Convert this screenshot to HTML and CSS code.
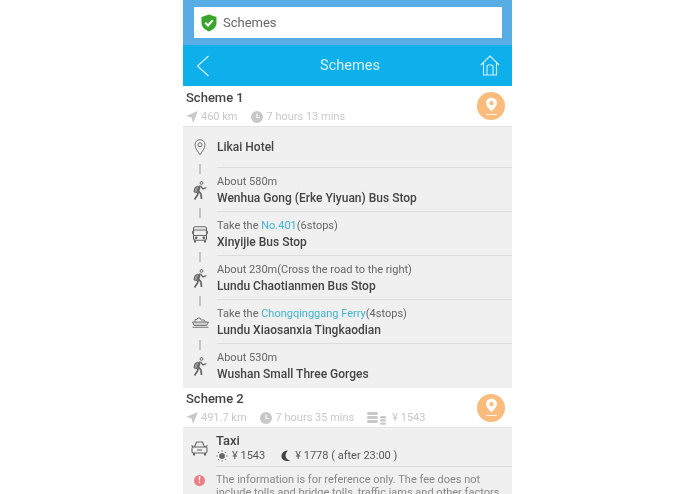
FILE: index.html
```html
<!DOCTYPE html>
<html lang="en">
<head>
  <meta charset="UTF-8">
  <meta name="viewport" content="width=device-width, initial-scale=1.0">
  <title>Schemes</title>
  <link rel="stylesheet" href="styles.css">
</head>
<body>
  <div class="app">
    <div class="top-bar">
      <div class="url-box">
        <svg class="shield" width="16" height="18" viewBox="0 0 16 18"><path d="M8 0.5 L15.5 3 V9 C15.5 13 12 16 8 17.5 C4 16 0.5 13 0.5 9 V3 Z" fill="#3aa52c"/><path d="M4.3 8.8 L7 11.5 L11.8 6.3" fill="none" stroke="#fff" stroke-width="2"/></svg>
        <span>Schemes</span>
      </div>
    </div>

    <!-- header -->
    <div class="nav">
      <svg width="14" height="22" viewBox="0 0 14 22"><path d="M12.5 1 L1.5 11 L12.5 21" fill="none" stroke="#d5f1fb" stroke-width="1.2"/></svg>
      <span class="nav-title">Schemes</span>
      <svg width="20" height="21" viewBox="0 0 20 21" fill="none" stroke="#d5f1fb" stroke-width="1.1"><path d="M0.8 10 L10 1 L19.2 10"/><path d="M3.5 8 V20 H16.5 V8"/><path d="M7 20 V12 C7 9 13 9 13 12 V20"/></svg>
    </div>

    <div class="scheme">
      <div class="scheme-info">
        <h3 class="scheme-name">Scheme 1</h3>
        <div class="scheme-meta">
          <span class="meta-item"><svg width="12" height="12" viewBox="0 0 12 12"><path d="M12 0 L7 12 L5.6 6.4 L0 5 Z" fill="#c8c8c8"/></svg>460 km</span>
          <span class="meta-item"><svg width="12" height="12" viewBox="0 0 12 12"><circle cx="6" cy="6" r="6" fill="#c8c8c8"/><path d="M6 2.5 V6.5 H9" fill="none" stroke="#fff" stroke-width="1.1"/></svg>7 hours 13 mins</span>
        </div>
      </div>
      <div class="pin-btn">
        <svg width="13" height="19" viewBox="0 0 12 17"><path d="M6 0.5 C2.8 0.5 1 2.8 1 5.3 C1 8.2 4 10.6 6 13 C8 10.6 11 8.2 11 5.3 C11 2.8 9.2 0.5 6 0.5 Z M6 3.4 A2 2 0 1 1 6 7.4 A2 2 0 1 1 6 3.4 Z" fill="#fff" fill-rule="evenodd"/><path d="M1 15.8 H11" stroke="#fff" stroke-width="0.8"/></svg>
      </div>
    </div>

    <div class="steps">
      <div class="step step-first">
        <div class="step-icon">
          <svg width="12" height="17" viewBox="0 0 12 17" fill="none" stroke="#666" stroke-width="0.9"><path d="M6 16 C4 12.5 1 9.5 1 5.8 C1 2.8 3.2 0.7 6 0.7 C8.8 0.7 11 2.8 11 5.8 C11 9.5 8 12.5 6 16 Z"/><circle cx="6" cy="5.8" r="2"/></svg>
        </div>
        <div class="step-body"><div class="step-place">Likai Hotel</div></div>
      </div>
      <div class="step">
        <div class="step-icon">
          <svg width="14" height="19" viewBox="0 0 14 19"><use href="#walker"/></svg>
        </div>
        <div class="step-body">
          <div class="step-note">About 580m</div>
          <div class="step-place">Wenhua Gong (Erke Yiyuan) Bus Stop</div>
        </div>
      </div>
      <div class="step">
        <div class="step-icon">
          <svg width="16" height="17" viewBox="0 0 16 17" fill="none" stroke="#666" stroke-width="1.1"><rect x="1.5" y="0.8" width="13" height="13.4" rx="2"/><path d="M1.5 4 H14.5 M1.5 9.5 H14.5 M0.3 5 V8 M15.7 5 V8"/><path d="M3 14.5 V16.5 M13 14.5 V16.5" stroke-width="2"/><circle cx="4.2" cy="11.8" r="0.8" fill="#666"/><circle cx="11.8" cy="11.8" r="0.8" fill="#666"/></svg>
        </div>
        <div class="step-body">
          <div class="step-note">Take the <span class="step-link">No.401</span>(6stops)</div>
          <div class="step-place">Xinyijie Bus Stop</div>
        </div>
      </div>
      <div class="step">
        <div class="step-icon">
          <svg width="14" height="19" viewBox="0 0 14 19"><use href="#walker"/></svg>
        </div>
        <div class="step-body">
          <div class="step-note">About 230m(Cross the road to the right)</div>
          <div class="step-place">Lundu Chaotianmen Bus Stop</div>
        </div>
      </div>
      <div class="step">
        <div class="step-icon">
          <svg width="17" height="11" viewBox="0 0 17 11" fill="none" stroke="#777" stroke-width="1"><path d="M0.5 5 H16.5 L14.5 8.5 H2 Z" fill="#ccc"/><path d="M3 5 V2.5 H5 L5.8 1 H8 L9 3 H12 L13.5 5"/><path d="M0.5 10.3 H16.5"/></svg>
        </div>
        <div class="step-body">
          <div class="step-note">Take the <span class="step-link">Chongqinggang Ferry</span>(4stops)</div>
          <div class="step-place">Lundu Xiaosanxia Tingkaodian</div>
        </div>
      </div>
      <div class="step step-last">
        <div class="step-icon">
          <svg width="14" height="19" viewBox="0 0 14 19"><use href="#walker"/></svg>
        </div>
        <div class="step-body">
          <div class="step-note">About 530m</div>
          <div class="step-place">Wushan Small Three Gorges</div>
        </div>
      </div>
    </div>

    <div class="scheme scheme-second">
      <div class="scheme-info">
        <h3 class="scheme-name">Scheme 2</h3>
        <div class="scheme-meta">
          <span class="meta-item"><svg width="12" height="12" viewBox="0 0 12 12"><path d="M12 0 L7 12 L5.6 6.4 L0 5 Z" fill="#c8c8c8"/></svg>491.7 km</span>
          <span class="meta-item"><svg width="12" height="12" viewBox="0 0 12 12"><circle cx="6" cy="6" r="6" fill="#c8c8c8"/><path d="M6 2.5 V6.5 H9" fill="none" stroke="#fff" stroke-width="1.1"/></svg>7 hours 35 mins</span>
          <span class="meta-item meta-fee"><svg width="20" height="13" viewBox="0 0 20 13" fill="#c8c8c8"><rect x="0" y="0" width="11" height="3" rx="1.4"/><rect x="0" y="4" width="11" height="3" rx="1.4"/><rect x="0" y="8" width="11" height="3" rx="1.4"/><rect x="13" y="4" width="6" height="2.4" rx="1.2"/><rect x="13" y="7.2" width="6" height="2.4" rx="1.2"/><rect x="13" y="10.4" width="6" height="2.4" rx="1.2"/></svg>&#165; 1543</span>
        </div>
      </div>
      <div class="pin-btn">
        <svg width="13" height="19" viewBox="0 0 12 17"><path d="M6 0.5 C2.8 0.5 1 2.8 1 5.3 C1 8.2 4 10.6 6 13 C8 10.6 11 8.2 11 5.3 C11 2.8 9.2 0.5 6 0.5 Z M6 3.4 A2 2 0 1 1 6 7.4 A2 2 0 1 1 6 3.4 Z" fill="#fff" fill-rule="evenodd"/><path d="M1 15.8 H11" stroke="#fff" stroke-width="0.8"/></svg>
      </div>
    </div>

    <div class="taxi">
      <div class="taxi-row">
        <div class="step-icon">
          <svg width="17" height="15" viewBox="0 0 17 15" fill="none" stroke="#666" stroke-width="1.1"><path d="M3.5 6 L5.5 1 H11.5 L13.5 6"/><path d="M0.5 4.5 L2.5 6 M16.5 4.5 L14.5 6"/><rect x="1" y="6" width="15" height="6" rx="1.5"/><path d="M3 12 V14.5 M14 12 V14.5" stroke-width="2"/><path d="M6 9 H11"/></svg>
        </div>
        <div class="taxi-body">
          <div class="taxi-title">Taxi</div>
          <div class="taxi-fares">
            <span class="fare"><svg width="12" height="12" viewBox="0 0 12 12" fill="#666" stroke="#666" stroke-width="0.8"><circle cx="6" cy="6" r="2.6"/><path d="M6 0.3 V1.8 M6 10.2 V11.7 M0.3 6 H1.8 M10.2 6 H11.7 M2 2 L3 3 M9 9 L10 10 M2 10 L3 9 M9 3 L10 2"/></svg>&#165; 1543</span>
            <span class="fare"><svg width="10" height="12" viewBox="0 0 10 12"><path d="M7 0.5 C3 0.8 0.5 3 0.5 6.2 C0.5 9.4 3.2 11.6 9.5 11 C6.4 9.8 4.6 8.2 4.6 5.8 C4.6 3.8 5.4 2 7 0.5 Z" fill="#444"/></svg>&#165; 1778 ( after 23:00 )</span>
          </div>
        </div>
      </div>
      <div class="taxi-note">
        <div class="step-icon"><span class="alert">!</span></div>
        <p class="note-text">The information is for reference only. The fee does not include tolls and bridge tolls, traffic jams and other factors</p>
      </div>
    </div>
  </div>

  <svg width="0" height="0" class="defs">
    <defs>
      <g id="walker" fill="none" stroke="#666" stroke-width="1">
        <circle cx="8.5" cy="2" r="1.4"/>
        <path d="M7 4.5 L5.5 10 L8 13 L8.5 18 M5.5 10 L4.5 14 L1.5 18.5" stroke-width="1.8"/>
        <path d="M7.5 5 L10 8 L13.5 6.5" stroke-width="1.3"/>
        <path d="M5 5 L2 6.5 L1 11 L3.8 11.5 L5.5 6 Z" fill="#999"/>
      </g>
    </defs>
  </svg>
</body>
</html>
```

FILE: styles.css
```css
* { margin: 0; padding: 0; box-sizing: border-box; }

html, body { height: 100%; overflow: hidden; background: #fff; }

body {
  font-family: Roboto, "Liberation Sans", sans-serif;
  color: #444;
}

.defs { display: block; position: absolute; }

.app {
  width: 329px;
  height: 494px;
  margin-left: 183px;
  overflow: hidden;
  background: #f0f0f0;
  filter: blur(0.3px);
}

.top-bar {
  height: 45px;
  padding: 7px 10px 7px 11px;
  background: #58aee4;
}
.url-box {
  display: flex;
  align-items: center;
  gap: 6px;
  height: 31px;
  padding-left: 7px;
  background: #fff;
  font-size: 13px;
  color: #666;
}

.nav {
  display: flex;
  align-items: center;
  justify-content: space-between;
  height: 41px;
  padding: 0 12px 0 13px;
  background: #0db0ea;
}
.nav-title {
  margin-left: 10px;
  font-size: 14.5px;
  color: #d5f1fb;
}

.scheme {
  display: flex;
  align-items: center;
  justify-content: space-between;
  height: 41px;
  padding: 0 7px 0 3px;
  background: #fff;
  border-bottom: 1px solid #e6e6e6;
}
.scheme-second { height: 40px; }
.scheme-name {
  font-size: 13px;
  font-weight: 500;
  line-height: 18px;
  color: #444;
}
.scheme-meta {
  display: flex;
  gap: 13px;
  margin-top: 3px;
  font-size: 11px;
  line-height: 14px;
  color: #c8c8c8;
}
.meta-item {
  display: flex;
  align-items: center;
  gap: 3px;
}
.meta-item + .meta-item { gap: 4px; }
.meta-item.meta-fee { gap: 5px; }
.pin-btn {
  display: flex;
  align-items: center;
  justify-content: center;
  width: 28px;
  height: 28px;
  border-radius: 50%;
  background: #f9bc7c;
}

.steps { background: #f0f0f0; }
.step {
  position: relative;
  display: flex;
  height: 44px;
}
.step-first { height: 41px; }
.step-icon {
  display: flex;
  align-items: center;
  justify-content: center;
  flex: none;
  width: 34px;
}
.step:not(.step-last)::after {
  content: "";
  position: absolute;
  left: 16px;
  bottom: -6px;
  width: 2px;
  height: 10px;
  background: #c4c4c4;
}
.step-body {
  display: flex;
  flex-direction: column;
  justify-content: center;
  flex: 1;
  gap: 2px;
  padding-top: 1px;
  border-bottom: 1px solid #ddd;
}
.step-last .step-body { border-bottom: 0; }
.step-note {
  font-size: 11px;
  line-height: 14px;
  color: #666;
}
.step-link { color: #3fb4d0; }
.step-place {
  font-size: 12px;
  font-weight: 500;
  line-height: 15px;
  color: #444;
}

.taxi { background: #f0f0f0; }
.taxi-row {
  display: flex;
  height: 39px;
}
.taxi-row .step-icon { width: 33px; padding-top: 2px; }
.taxi-body {
  flex: 1;
  padding-top: 5px;
  border-bottom: 1px solid #ddd;
}
.taxi-title {
  font-size: 13px;
  font-weight: 500;
  line-height: 16px;
}
.taxi-fares {
  display: flex;
  gap: 16px;
  font-size: 11px;
  line-height: 14px;
  color: #555;
}
.fare {
  display: flex;
  align-items: center;
  gap: 4px;
}
.taxi-note {
  display: flex;
  padding-top: 6px;
}
.taxi-note .step-icon { width: 33px; align-items: flex-start; padding-top: 2px; }
.alert {
  width: 11px;
  height: 11px;
  border-radius: 50%;
  background: #ec7f86;
  color: #fff;
  font-size: 9px;
  font-weight: 700;
  line-height: 11px;
  text-align: center;
}
.note-text {
  flex: 1;
  font-size: 11px;
  line-height: 13px;
  color: #888;
}
```
